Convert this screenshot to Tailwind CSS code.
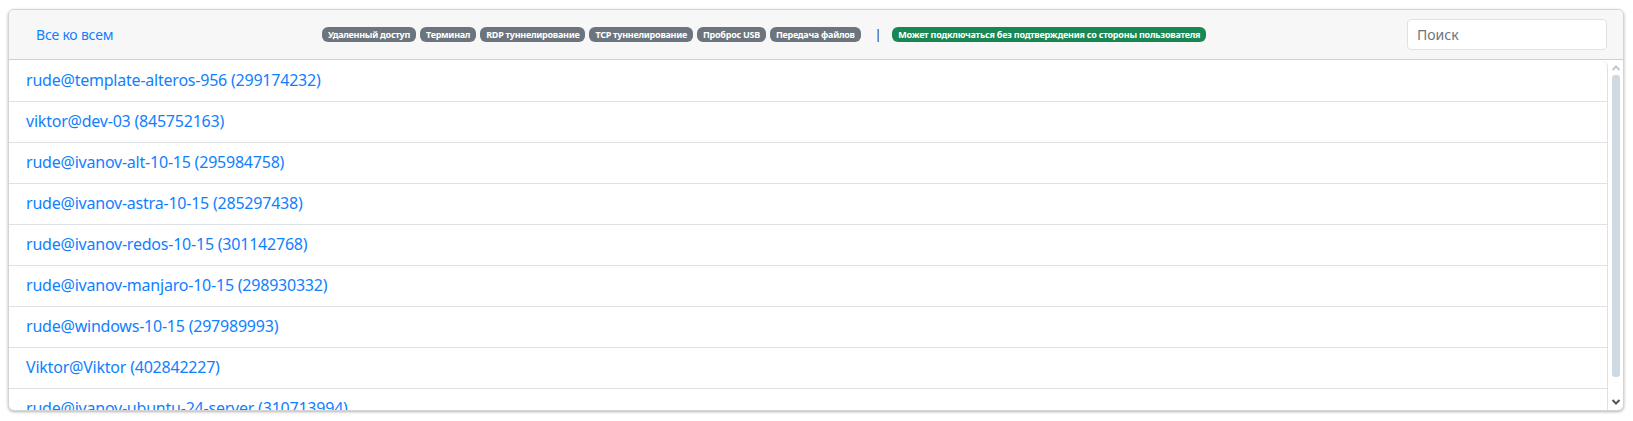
<!DOCTYPE html>
<html lang="en">
<head>
  <meta charset="UTF-8" />
  <title>Все ко всем</title>
  <script src="https://cdn.jsdelivr.net/npm/@tailwindcss/browser@4"></script>
</head>
<body class="h-[421px] overflow-hidden bg-white font-['Noto_Sans','Open_Sans',sans-serif]">
  <div class="pt-[9px] pl-[8px] w-[1624px]">
    <div class="h-[402px] flex flex-col rounded-[6px] border border-[#d4d4d4] shadow-[0_1px_3px_rgba(0,0,0,0.3)] overflow-hidden bg-white">
      <!-- Header -->
      <div class="h-[50px] shrink-0 flex items-center bg-[#f7f7f7] border-b border-[#cfcfcf]">
        <a class="ml-[27px] w-[286px] text-[14px] tracking-[-0.2px] text-[#1080ff]">Все ко всем</a>
        <div class="flex items-center gap-[4px]">
          <span class="h-[15px] flex items-center px-[6px] rounded-[6px] bg-[#6c757d] text-white text-[9px] tracking-[-0.27px] font-bold">Удаленный доступ</span>
          <span class="h-[15px] flex items-center px-[6px] rounded-[6px] bg-[#6c757d] text-white text-[9px] tracking-[-0.27px] font-bold">Терминал</span>
          <span class="h-[15px] flex items-center px-[6px] rounded-[6px] bg-[#6c757d] text-white text-[9px] tracking-[-0.27px] font-bold">RDP туннелирование</span>
          <span class="h-[15px] flex items-center px-[6px] rounded-[6px] bg-[#6c757d] text-white text-[9px] tracking-[-0.27px] font-bold">TCP туннелирование</span>
          <span class="h-[15px] flex items-center px-[6px] rounded-[6px] bg-[#6c757d] text-white text-[9px] tracking-[-0.27px] font-bold">Проброс USB</span>
          <span class="h-[15px] flex items-center px-[6px] rounded-[6px] bg-[#6c757d] text-white text-[9px] tracking-[-0.27px] font-bold">Передача файлов</span>
        </div>
        <span class="ml-[14px] mr-[11px] text-[12px] text-[#212529]">|</span>
        <span class="h-[15px] flex items-center px-[6px] rounded-[6px] bg-[#198754] text-white text-[9px] tracking-[-0.22px] font-bold">Может подключаться без подтверждения со стороны пользователя</span>
        <input placeholder="Поиск" class="ml-auto mr-[16px] w-[200px] h-[31px] px-[9px] text-[14px] bg-white border border-[#dee2e6] rounded-[4px] placeholder:text-[#6c757d]" />
      </div>
      <!-- List + scrollbar -->
      <div class="flex-1 flex min-h-0">
        <div class="flex-1 min-w-0 mt-[1px] overflow-hidden rounded-t-[6px] border-r border-[#dee2e6]">
          <a class="block h-[41px] pl-[17px] pt-[7px] text-[16px] tracking-[-0.22px] text-[#1080ff] border-b border-[#dee2e6]">rude@template-alteros-956 (299174232)</a>
          <a class="block h-[41px] pl-[17px] pt-[7px] text-[16px] tracking-[-0.22px] text-[#1080ff] border-b border-[#dee2e6]">viktor@dev-03 (845752163)</a>
          <a class="block h-[41px] pl-[17px] pt-[7px] text-[16px] tracking-[-0.22px] text-[#1080ff] border-b border-[#dee2e6]">rude@ivanov-alt-10-15 (295984758)</a>
          <a class="block h-[41px] pl-[17px] pt-[7px] text-[16px] tracking-[-0.22px] text-[#1080ff] border-b border-[#dee2e6]">rude@ivanov-astra-10-15 (285297438)</a>
          <a class="block h-[41px] pl-[17px] pt-[7px] text-[16px] tracking-[-0.22px] text-[#1080ff] border-b border-[#dee2e6]">rude@ivanov-redos-10-15 (301142768)</a>
          <a class="block h-[41px] pl-[17px] pt-[7px] text-[16px] tracking-[-0.22px] text-[#1080ff] border-b border-[#dee2e6]">rude@ivanov-manjaro-10-15 (298930332)</a>
          <a class="block h-[41px] pl-[17px] pt-[7px] text-[16px] tracking-[-0.22px] text-[#1080ff] border-b border-[#dee2e6]">rude@windows-10-15 (297989993)</a>
          <a class="block h-[41px] pl-[17px] pt-[7px] text-[16px] tracking-[-0.22px] text-[#1080ff] border-b border-[#dee2e6]">Viktor@Viktor (402842227)</a>
          <a class="block h-[41px] pl-[17px] pt-[7px] text-[16px] tracking-[-0.22px] text-[#1080ff] border-b border-[#dee2e6]">rude@ivanov-ubuntu-24-server (310713994)</a>
        </div>
        <!-- Scrollbar -->
        <div class="w-[15px] shrink-0 flex flex-col items-center">
          <svg class="mt-[4px] w-[10px] h-[8px] shrink-0" viewBox="0 0 10 8" fill="none" stroke="#c4c8cc" stroke-width="2"><path d="M1.5 6 5 2.5 8.5 6"/></svg>
          <div class="mt-[3px] w-[8px] h-[302px] rounded-[3px] bg-[#cfd9e2]"></div>
          <svg class="mt-auto mb-[4px] w-[10px] h-[8px] shrink-0" viewBox="0 0 10 8" fill="none" stroke="#555" stroke-width="2"><path d="M1.5 2 5 5.5 8.5 2"/></svg>
        </div>
      </div>
    </div>
  </div>
</body>
</html>
